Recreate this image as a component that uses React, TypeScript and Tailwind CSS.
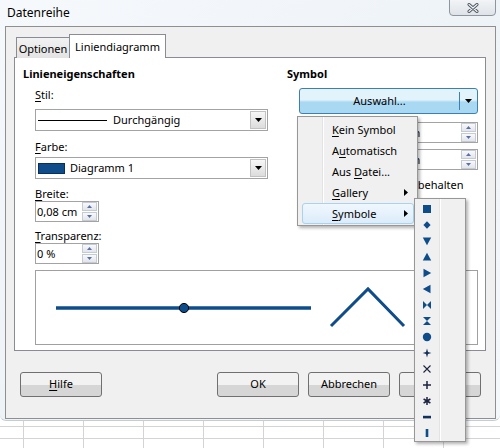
import React from "react";

const BLUE = "#0f4c8a";

function DownTri({ color = "#000", w = 7, h = 4 }: { color?: string; w?: number; h?: number }) {
  return (
    <svg width={w} height={h} viewBox="0 0 7 4">
      <path d="M0 0h7L3.5 4z" fill={color} />
    </svg>
  );
}

function SelectBox({ children }: { children: React.ReactNode }) {
  return (
    <div className="flex h-[22px] w-[233px] items-center border border-[#a3a3a3] bg-white">
      <div className="flex min-w-0 flex-1 items-center pl-[2px]">{children}</div>
      <div className="mr-px flex h-[18px] w-[16px] items-center justify-center border border-[#c2c2c2] bg-gradient-to-b from-[#f7f7f7] to-[#dcdcdc]">
        <DownTri />
      </div>
    </div>
  );
}

function SpinBtn({ up }: { up?: boolean }) {
  return (
    <div className="flex h-[9px] items-center justify-center border border-[#c6cad3] bg-gradient-to-b from-[#f8f9fb] to-[#e2e5eb]">
      <svg width="5" height="3" viewBox="0 0 5 3">
        <path d={up ? "M0 3h5L2.5 0z" : "M0 0h5L2.5 3z"} fill="#5a6fa6" />
      </svg>
    </div>
  );
}

function Spinner({ value, className }: { value: string; className: string }) {
  return (
    <div className={`flex h-[21px] border border-[#a3a3a3] bg-white ${className}`}>
      <span className="flex-1 whitespace-nowrap pl-[1px] leading-[19px]">{value}</span>
      <div className="mr-px flex w-[15px] flex-col gap-px">
        <SpinBtn up />
        <SpinBtn />
      </div>
    </div>
  );
}

function Label({ u, rest, className = "" }: { u: string; rest: string; className?: string }) {
  return (
    <div className={`leading-[15px] ${className}`}>
      <span className="underline underline-offset-2">{u}</span>
      {rest}
    </div>
  );
}

function DlgButton({ children, className = "" }: { children: React.ReactNode; className?: string }) {
  return (
    <div
      className={`flex h-[25px] items-center justify-center rounded-[3px] border border-[#707070] bg-gradient-to-b from-[#f2f2f2] from-50% to-[#d6d6d6] to-50% ${className}`}
    >
      {children}
    </div>
  );
}

function MenuArrow() {
  return (
    <svg width="4" height="7" viewBox="0 0 4 7">
      <path d="M0 0L4 3.5L0 7z" fill="#000" />
    </svg>
  );
}

const symbolShapes: React.ReactNode[] = [
  <rect key="sq" x="1" y="1" width="8" height="8" fill={BLUE} />,
  <path key="di" d="M5 1.2L8.6 5L5 8.8L1.4 5z" fill={BLUE} />,
  <path key="dn" d="M0.8 1.5H9.2L5 9.2z" fill={BLUE} />,
  <path key="up" d="M5 0.8L9.2 8.5H0.8z" fill={BLUE} />,
  <path key="rt" d="M1.5 0.8L9.2 5L1.5 9.2z" fill={BLUE} />,
  <path key="lt" d="M8.5 0.8L0.8 5L8.5 9.2z" fill={BLUE} />,
  <path key="bt" d="M1 1L5 5L1 9zM9 1L5 5L9 9z" fill={BLUE} />,
  <path key="hg" d="M1 1H9L5 5zM1 9H9L5 5z" fill={BLUE} />,
  <circle key="ci" cx="5" cy="5" r="4.2" fill={BLUE} />,
  <path key="st" d="M5 0.6L6 4L9.4 5L6 6L5 9.4L4 6L0.6 5L4 4z" fill="#12305a" />,
  <path key="x" d="M1.5 1.5L8.5 8.5M8.5 1.5L1.5 8.5" stroke="#1b2540" strokeWidth="1.1" fill="none" />,
  <path key="pl" d="M5 1V9M1 5H9" stroke="#1b2540" strokeWidth="1.5" fill="none" />,
  <path key="as" d="M5 1V9M1.6 3L8.4 7M8.4 3L1.6 7" stroke="#1b2540" strokeWidth="1.5" fill="none" />,
  <rect key="hb" x="1" y="3.8" width="8" height="2.6" fill="#12305a" />,
  <rect key="vb" x="3.7" y="1" width="2.6" height="8" fill={BLUE} />,
];

function SymbolMenu() {
  return (
    <div className="absolute left-[414px] top-[198px] w-[52px] border border-[#979797] bg-[#f0f0f0] pt-[2px] shadow-[2px_2px_3px_rgba(0,0,0,0.3)]">
      <div className="absolute bottom-0 left-[24px] top-0 w-px bg-[#e2e3e3]" />
      <div className="absolute bottom-0 left-[25px] top-0 w-px bg-white" />
      {symbolShapes.map((s, i) => (
        <div key={i} className="flex h-[16px] w-[24px] items-center justify-center">
          <svg width="10" height="10" viewBox="0 0 10 10">
            {s}
          </svg>
        </div>
      ))}
    </div>
  );
}

function ChoiceMenu() {
  const items: { u?: string; pre?: string; rest: string; arrow?: boolean; hot?: boolean }[] = [
    { u: "K", rest: "ein Symbol" },
    { pre: "A", u: "u", rest: "tomatisch" },
    { pre: "Aus ", u: "D", rest: "atei..." },
    { u: "G", rest: "allery", arrow: true },
    { u: "S", rest: "ymbole", arrow: true, hot: true },
  ];
  return (
    <div className="absolute left-[297px] top-[116px] w-[121px] border border-[#979797] bg-[#f0f0f0] pb-px pl-[4px] pr-[3px] pt-[2px] shadow-[2px_2px_3px_rgba(0,0,0,0.3)]">
      <div className="absolute bottom-0 left-[24px] top-0 w-px bg-[#e2e3e3]" />
      <div className="absolute bottom-0 left-[25px] top-0 w-px bg-white" />
      {items.map((it, i) => (
        <div
          key={i}
          className={`relative flex h-[21px] items-center justify-between rounded-[3px] border pl-[29px] pr-[5px] ${
            it.hot
              ? "border-[#a8d2f0] bg-gradient-to-b from-[#f0f7fd] to-[#dcecfa]"
              : "border-transparent"
          }`}
        >
          <span className="leading-[16px]">
            {it.pre}
            <span className="underline underline-offset-2">{it.u}</span>
            {it.rest}
          </span>
          {it.arrow ? <MenuArrow /> : null}
        </div>
      ))}
    </div>
  );
}

function Preview() {
  return (
    <div className="ml-[12px] mt-[6px] h-[75px] w-[443px] border border-[#a0a0a0] bg-white">
      <svg width="441" height="73" viewBox="0 0 441 73">
        <line x1="20" y1="37" x2="275" y2="37" stroke={BLUE} strokeWidth="3.5" />
        <circle cx="148" cy="37" r="4.6" fill={BLUE} stroke="#000" strokeWidth="1" />
        <path d="M295 55L332 18L368 55" stroke={BLUE} strokeWidth="3" fill="none" />
      </svg>
    </div>
  );
}

function SheetRow({ h }: { h: string }) {
  return (
    <div className={`flex border-b border-[#d4d4d4] ${h}`}>
      <div className="w-[24px] shrink-0 border-r border-[#d4d4d4]" />
      {Array.from({ length: 8 }).map((_, i) => (
        <div key={i} className="w-[60px] shrink-0 border-r border-[#d4d4d4]" />
      ))}
    </div>
  );
}

export default function App() {
  return (
    <div className="relative h-[448px] w-[500px] overflow-hidden bg-white font-['Noto_Sans','Open_Sans',sans-serif] text-[11px] text-black">
      <div className="h-[421px] rounded-b-[6px] border-b border-[#c4ccd4] bg-gradient-to-br from-[#f6f9fc] via-[#eef3f8] to-[#f5f8fb]">
        {/* title bar */}
        <div className="flex h-[26px] items-start justify-between pl-[7px] pr-[4px]">
          <span className="pt-[5px] text-[12px] leading-[16px]">Datenreihe</span>
          <div className="-mt-px flex h-[17px] w-[47px] items-center justify-center rounded-b-[4px] border border-[#8e959e] bg-gradient-to-b from-[#f2f4f6] to-[#dfe3e8]">
            <svg width="12" height="10" viewBox="0 0 12 10">
              <path d="M2 1.5L10 8.5M10 1.5L2 8.5" stroke="#4b5360" strokeWidth="3" strokeLinecap="round" />
              <path d="M2 1.5L10 8.5M10 1.5L2 8.5" stroke="#f4f6f8" strokeWidth="1.2" strokeLinecap="round" />
            </svg>
          </div>
        </div>

        {/* client area */}
        <div className="ml-[5px] mr-[4px] h-[393px] border border-[#8f8f8f] bg-[#f0f0f0] pl-[8px] pr-[9px] pt-[7px]">
          {/* tabs */}
          <div className="flex h-[24px] items-end pl-[2px]">
            <div className="flex h-[21px] w-[54px] items-start justify-center border border-b-0 border-[#898c95] bg-gradient-to-b from-[#f2f2f2] to-[#e3e3e3] pt-[3px] leading-[16px]">
              Optionen
            </div>
            <div className="relative z-10 -ml-px flex h-[24px] w-[97px] items-start justify-center border border-b-0 border-[#898c95] bg-white pt-[4px] leading-[16px]">
              Liniendiagramm
            </div>
          </div>

          {/* tab panel */}
          <div className="-mt-px h-[294px] border border-[#898c95] bg-white pl-[8px] pr-[7px] pt-[8px]">
            <div className="flex">
              <div className="w-[264px] shrink-0">
                <div className="font-bold leading-[16px]">Linieneigenschaften</div>
                <div className="pl-[12px]">
                  <Label u="S" rest="til:" className="mt-[5px]" />
                  <div className="mt-[7px]">
                    <SelectBox>
                      <div className="h-px w-[69px] bg-black" />
                      <span className="ml-[6px] leading-[16px]">Durchgängig</span>
                    </SelectBox>
                  </div>
                  <Label u="F" rest="arbe:" className="mt-[8px]" />
                  <div className="mt-[3px]">
                    <SelectBox>
                      <div className="h-[11px] w-[27px] border border-[#0a2f5a]" style={{ backgroundColor: BLUE }} />
                      <span className="ml-[5px] leading-[16px]">Diagramm 1</span>
                    </SelectBox>
                  </div>
                  <Label u="B" rest="reite:" className="mt-[7px]" />
                  <Spinner value="0,08 cm" className="w-[64px]" />
                  <Label u="T" rest="ransparenz:" className="mt-[6px]" />
                  <Spinner value="0 %" className="w-[64px]" />
                </div>
              </div>

              <div className="flex-1">
                <div className="font-bold leading-[16px]">Symbol</div>
                <div className="pl-[12px]">
                  <div className="mt-[6px] flex h-[26px] items-stretch rounded-[3px] border border-[#3c7fb1] bg-gradient-to-b from-[#e3f3fc] from-45% to-[#a9d8f3] to-55%">
                    <div className="flex flex-1 items-center justify-center leading-[16px]">Auswahl...</div>
                    <div className="my-[3px] w-px bg-[#3c7fb1]" />
                    <div className="flex w-[17px] items-center justify-center">
                      <DownTri />
                    </div>
                  </div>
                  <div className="mt-[8px] flex items-center justify-between">
                    <Label u="B" rest="reite:" />
                    <Spinner value="0,25 cm" className="w-[100px]" />
                  </div>
                  <div className="mt-[6px] flex items-center justify-between">
                    <Label u="H" rest="öhe:" />
                    <Spinner value="0,25 cm" className="w-[100px]" />
                  </div>
                  <div className="mt-[7px] flex items-center gap-[4px]">
                    <div className="h-[13px] w-[13px] border border-[#8f8f8f] bg-white" />
                    <span className="whitespace-nowrap leading-[16px]">Seitenverhältnis beibehalten</span>
                  </div>
                </div>
              </div>
            </div>
            <Preview />
          </div>

          {/* dialog buttons */}
          <div className="mt-[21px] flex pr-[5px]">
            <DlgButton className="ml-[6px] w-[82px]">
              <span>
                <span className="underline underline-offset-2">H</span>ilfe
              </span>
            </DlgButton>
            <div className="ml-auto flex gap-[9px]">
              <DlgButton className="w-[82px]">OK</DlgButton>
              <DlgButton className="w-[82px]">Abbrechen</DlgButton>
              <DlgButton className="w-[82px]">Zurück</DlgButton>
            </div>
          </div>
        </div>
      </div>

      {/* spreadsheet behind the dialog */}
      <div className="bg-white">
        <SheetRow h="h-[6px]" />
        <SheetRow h="h-[12px]" />
        <SheetRow h="h-[12px]" />
      </div>

      <ChoiceMenu />
      <SymbolMenu />
    </div>
  );
}
